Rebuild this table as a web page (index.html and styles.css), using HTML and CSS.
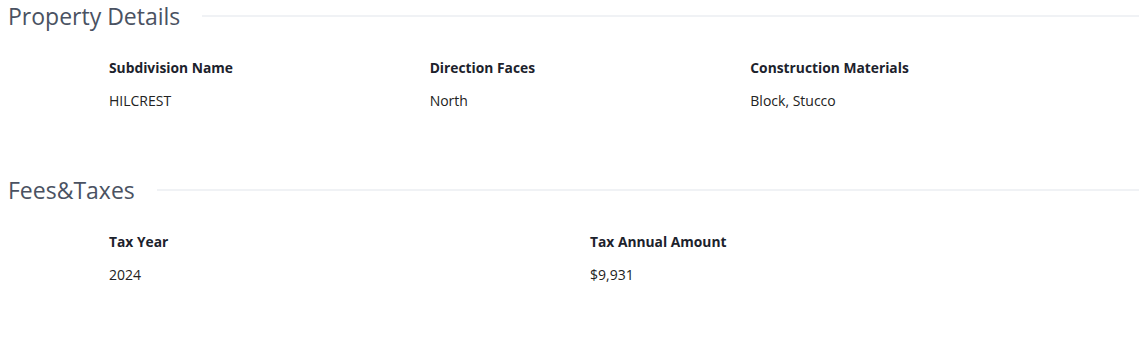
FILE: index.html
```html
<!DOCTYPE html>
<html lang="en">
<head>
    <meta charset="UTF-8">
    <meta name="viewport" content="width=device-width, initial-scale=1.0">
    <title>Property Details</title>
    <link rel="stylesheet" href="styles.css">
</head>
<body>
    <div class="section">
        <h2 class="section-title">Property Details</h2>
        <div class="details cols-3">
            <div class="detail">
                <div class="detail-label">Subdivision Name</div>
                <div class="detail-value">HILCREST</div>
            </div>
            <div class="detail">
                <div class="detail-label">Direction Faces</div>
                <div class="detail-value">North</div>
            </div>
            <div class="detail">
                <div class="detail-label">Construction Materials</div>
                <div class="detail-value">Block, Stucco</div>
            </div>
        </div>
    </div>

    <div class="section">
        <h2 class="section-title">Fees&amp;Taxes</h2>
        <div class="details cols-2">
            <div class="detail">
                <div class="detail-label">Tax Year</div>
                <div class="detail-value">2024</div>
            </div>
            <div class="detail">
                <div class="detail-label">Tax Annual Amount</div>
                <div class="detail-value">$9,931</div>
            </div>
        </div>
    </div>
</body>
</html>
```

FILE: styles.css
```css
body { font-family: 'Open Sans', 'Lato', sans-serif; background-color: #fff; color: #222; margin: 0; padding: 0 0 0 8px; }
.section { margin-bottom: 63px; }
.section-title { display: flex; align-items: center; gap: 22px; margin: 0; font-size: 23px; line-height: 32px; font-weight: 400; color: #4a5262; }
.section-title::after { content: ''; flex: 1; height: 2px; background-color: #f0f2f5; }
.details { display: grid; margin: 26px 0 0 101px; width: 962px; }
.cols-3 { grid-template-columns: repeat(3, 1fr); }
.cols-2 { grid-template-columns: repeat(2, 1fr); }
.detail-label { font-size: 13.8px; line-height: 20px; font-weight: 700; color: #1c222c; }
.detail-value { margin-top: 13px; font-size: 14px; line-height: 20px; color: #222; }
```
